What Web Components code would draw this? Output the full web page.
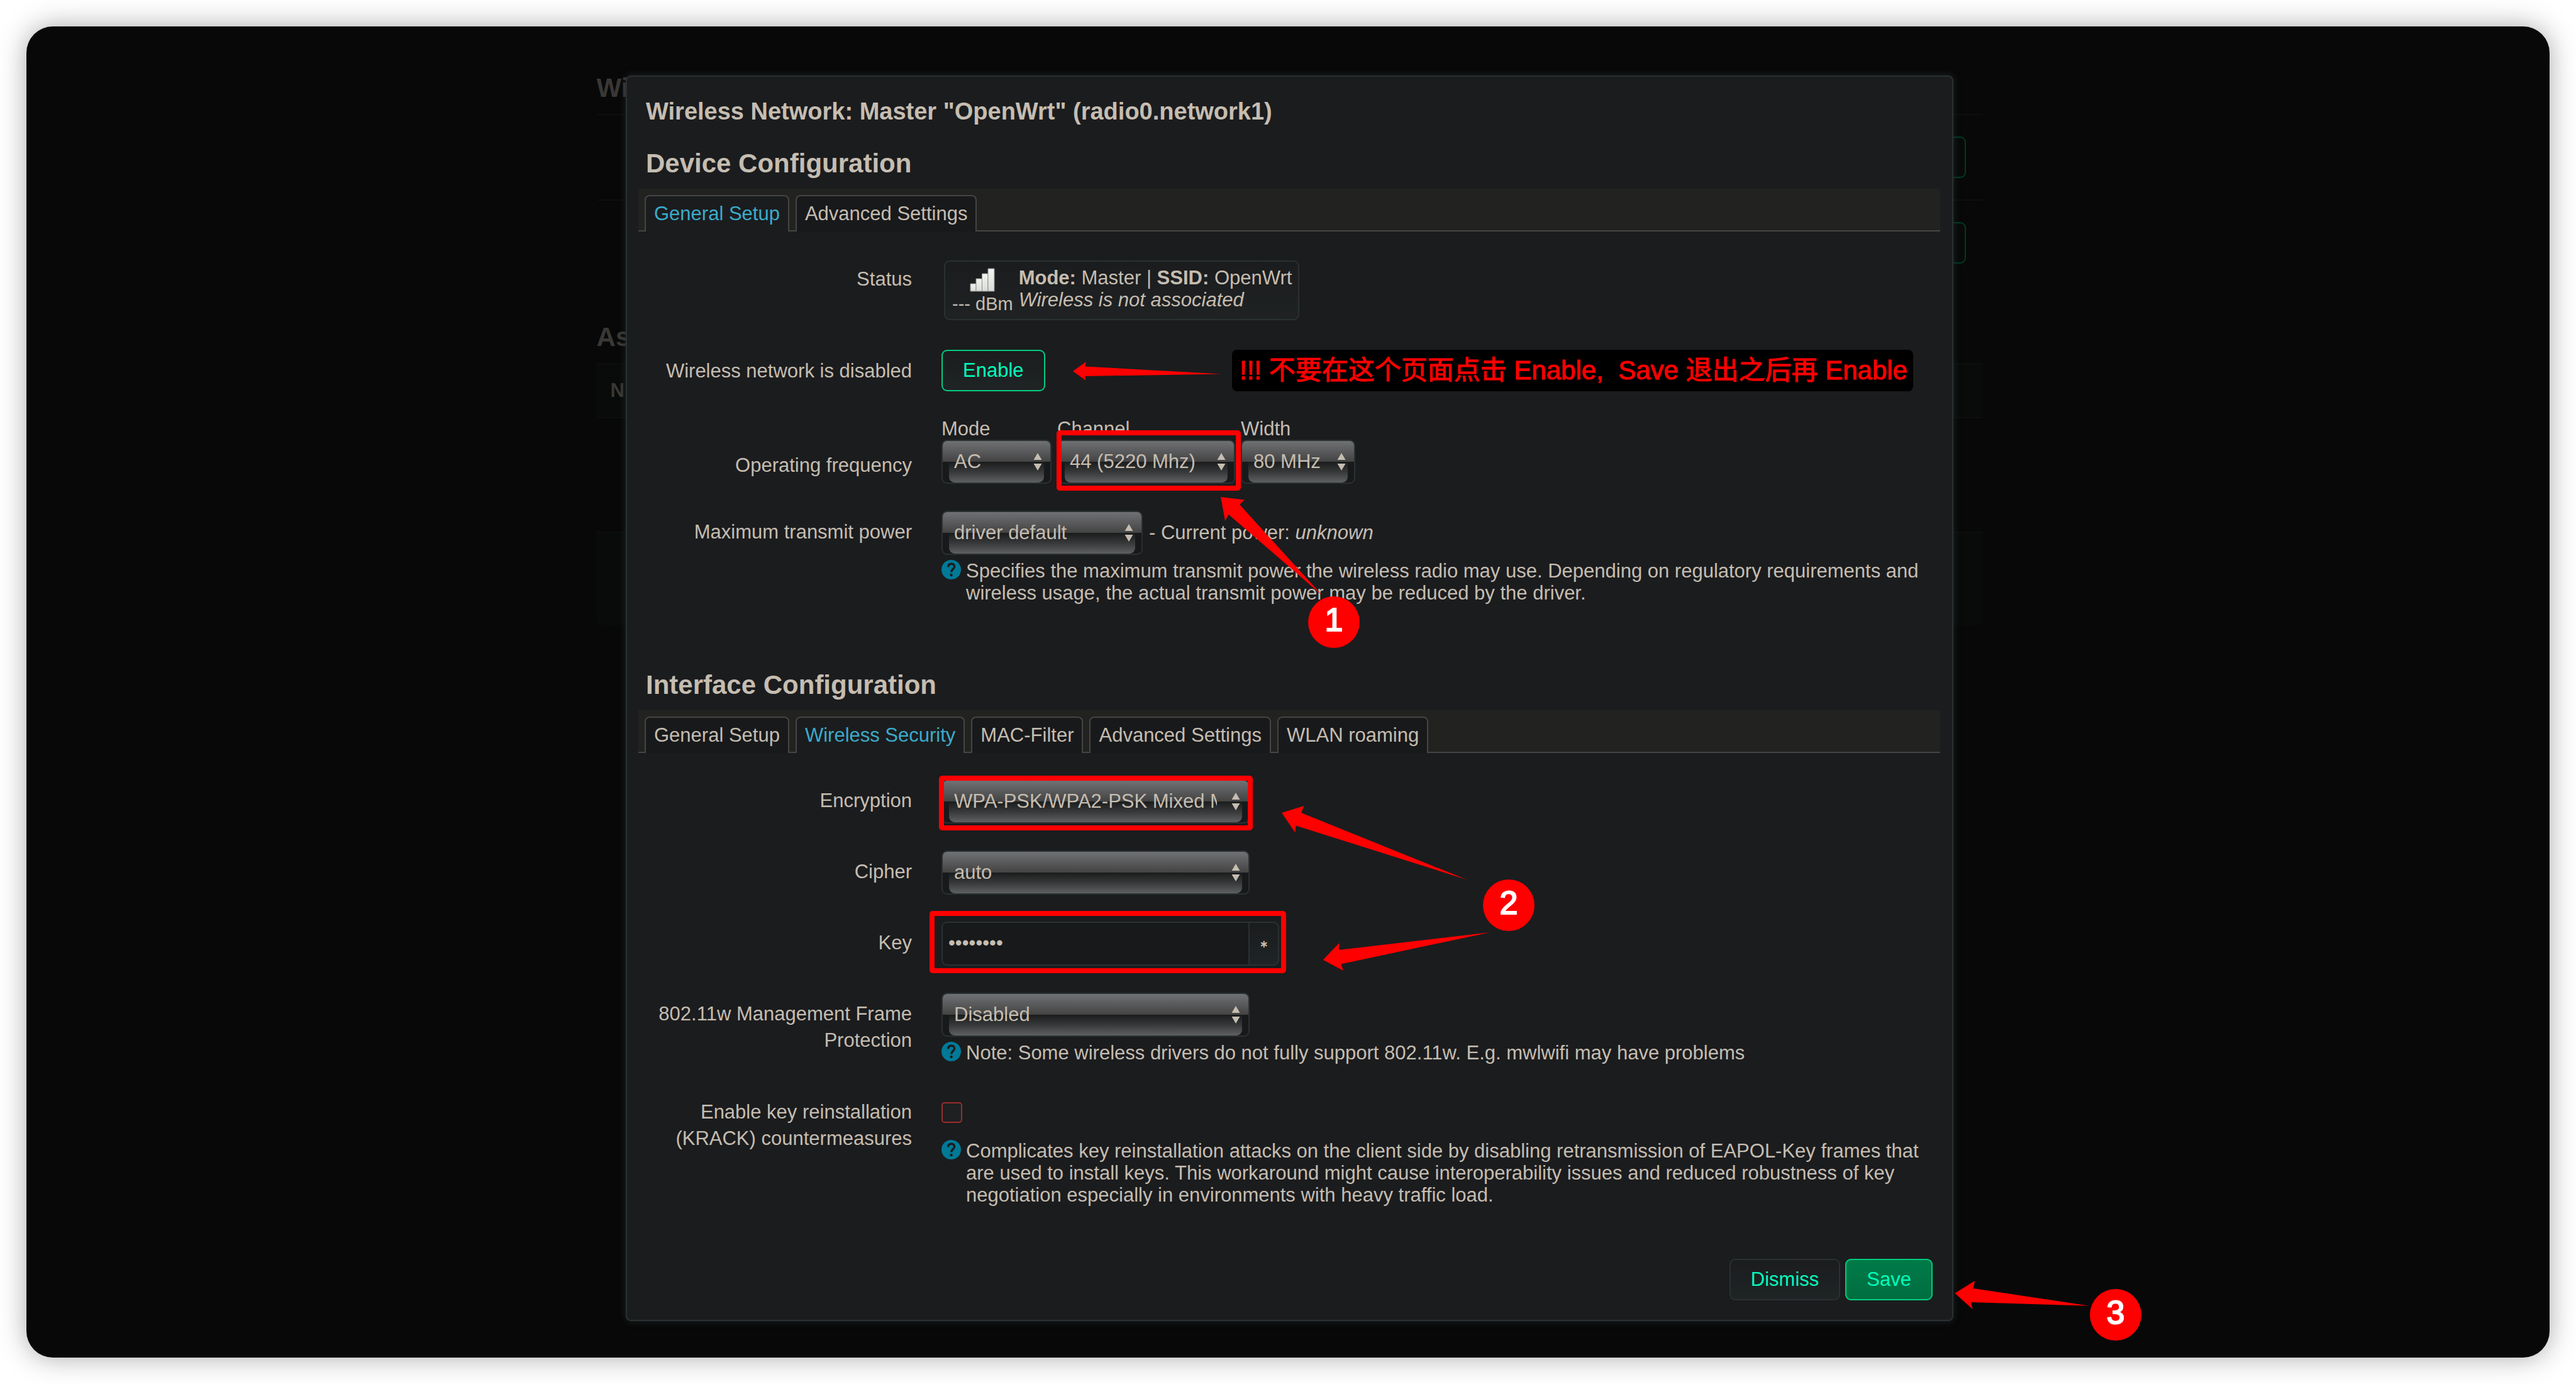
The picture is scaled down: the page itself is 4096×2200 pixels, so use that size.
<!DOCTYPE html>
<html lang="en">
<head>
<meta charset="utf-8">
<title>Wireless Network</title>
<style>
  body {
    margin: 0;
    min-height: 100vh;
    box-sizing: border-box;
    padding: 42px;
    display: flex;
    position: relative;
    overflow-x: hidden;
    background: #fff;
    color: #c5bdb1;
    font: 31px/35px "Liberation Sans", "Noto Sans CJK SC", sans-serif;
  }
</style>
</head>
<body>
<app-window>
  <overview-page></overview-page>
  <wifi-dialog></wifi-dialog>
</app-window>
<mark-layer></mark-layer>

<script>
const define = (name, html) => customElements.define(name, class extends HTMLElement {
  constructor() {
    super();
    this.attachShadow({ mode: "open" }).innerHTML = html;
  }
});

/* Rounded browser frame: the page and the dialog share one grid cell */
define("app-window", `
<style>
  :host {
    flex: 1;
    display: grid;
    grid-template-columns: minmax(0, 1fr);
    justify-items: center;
    align-items: start;
    padding-left: 5px;
    border-radius: 42px;
    background: #080808;
    box-shadow: 0 0 44px rgba(0, 0, 0, .34);
  }
  ::slotted(*) { grid-area: 1 / 1; }
</style>
<slot></slot>`);

/* Dimmed page behind the dialog */
define("overview-page", `
<style>
  :host { display: block; width: 55%; padding-top: 74px; color: #393836; }
  h2 { margin: 0; font-size: 42px; line-height: 48px; }
  .radio {
    display: flex; justify-content: flex-end; align-items: center;
    height: 134px; margin-top: 17px; padding-right: 26px;
    border-top: 2px solid #0d0f0f;
  }
  .radio + .radio { margin-top: 0; }
  .slot { width: 160px; height: 62px; border: 2px solid #003a25; border-radius: 9px; background: #090a0a; }
  h2.second { margin-top: 59px; }
  .head {
    margin-top: 17px; padding: 0 22px; height: 84px; line-height: 84px; font-weight: bold;
    border: solid #0d0f0f; border-width: 2px 0; background: #080b0a;
  }
  .foot { margin-top: 180px; height: 147px; border-top: 2px solid #0d0f0f; background: #080b0a; border-radius: 0 0 8px 8px; }
</style>
<h2>Wi</h2>
<div class="radio"><div class="slot"></div></div>
<div class="radio"><div class="slot"></div></div>
<h2 class="second">As</h2>
<div class="head">N</div>
<div class="foot"></div>`);

define("tab-strip", `
<style>
  :host {
    display: flex; gap: 10px;
    margin: 0 -12px 42px;
    padding: 10px 10px 0;
    background: #222220;
    box-shadow: inset 0 -2px #454545;
  }
  ::slotted(a) {
    box-sizing: border-box; height: 58px;
    padding: 0 13px; line-height: 56px;
    border: 2px solid #454545; border-bottom: 0;
    border-radius: 8px 8px 0 0;
    background: #18191b; color: inherit; text-decoration: none; white-space: nowrap;
  }
  ::slotted(a[aria-current]) { background: #1b1c1e; color: #3cabca; }
</style>
<slot></slot>`);

/* Right-aligned label column and a content column */
define("form-row", `
<style>
  :host { display: grid; grid-template-columns: 423px minmax(0, 1fr); column-gap: 47px; align-items: start; }
  .label { padding-top: var(--label-top, 13px); line-height: 42px; text-align: right; }
</style>
<div class="label"><slot name="label"></slot></div>
<div><slot></slot></div>`);

/* Glossy drop-down face: full-width upper sheen, inset lower sheen, arrows */
define("gloss-box", `
<style>
  :host {
    position: relative; display: block; box-sizing: border-box;
    height: 70px; width: var(--w, 490px);
    border: 2px solid #2a3132; border-radius: 9px; overflow: hidden;
    background: linear-gradient(#707174, #434343) 0 0 / 100% 33px no-repeat, #18191b;
  }
  :host::before {
    content: ""; position: absolute; left: 10px; right: 10px; bottom: 0; height: 33px;
    border-radius: 0 0 9px 9px; background: linear-gradient(#1a1c1c, #37393a 50%, #5f6062);
  }
  svg { position: absolute; right: 13px; top: 19px; width: 14px; height: 28px; fill: #c5bdb1; pointer-events: none; }
</style>
<slot></slot>
<svg viewBox="0 0 14 28" aria-hidden="true"><path d="M7 0 13.500 11H.5ZM.5 17H13.500L7 28Z"/></svg>`);

define("help-note", `
<style>
  :host { display: flex; gap: 8px; margin-top: 8px; }
  svg { flex: none; width: 31px; height: 31px; }
</style>
<svg viewBox="0 0 31 31" aria-hidden="true">
  <circle cx="15.5" cy="15.5" r="15.5" fill="#007a97"/>
  <path d="M10.5 11.5C10.5 8 12.5 6.2 15.6 6.2S20.6 8 20.6 11C20.6 14.6 15.6 14.8 15.6 19.6" fill="none" stroke="#1b1c1e" stroke-width="3.4"/>
  <circle cx="15.6" cy="24" r="2.2" fill="#1b1c1e"/>
</svg>
<div><slot></slot></div>`);

define("status-badge", `
<style>
  :host {
    display: flex; gap: 9px; box-sizing: border-box; width: fit-content; height: 95px; margin: 4px 0 4px 4px;
    padding: 8px 10px 0 11px;
    border: 2px solid #2a3132; border-radius: 9px;
    background: linear-gradient(#1b1c1e, #1f2223); white-space: nowrap;
  }
  .signal { display: flex; flex-direction: column; align-items: center; font-size: 29px; }
  svg { width: 40px; height: 38px; margin: 2px 0 4px; }
  .signal span { line-height: 30px; }
</style>
<div class="signal">
  <svg viewBox="0 0 40 38" aria-hidden="true">
    <defs><linearGradient id="g" x2="0" y2="1"><stop stop-color="#f4f4f1"/><stop offset="1" stop-color="#d9dcd6"/></linearGradient></defs>
    <g fill="url(#g)" stroke="#8f9190" stroke-width="1"><path d="M1 25H10V37H1Z"/><path d="M10 17H19.500V37H10Z"/><path d="M19.500 9H29V37H19.500Z"/><path d="M29 1H39V37H29Z"/></g>
  </svg>
  <span>--- dBm</span>
</div>
<div><slot></slot></div>`);

define("wifi-dialog", `
<style>
  :host {
    display: block; box-sizing: border-box; position: relative;
    width: 2111px; max-width: 96%;
    margin: 78px 0 58px; padding: 33px 31px 31px 30px;
    border: 2px solid #2a3132; border-radius: 8px;
    background: #1b1c1e; box-shadow: 0 0 12px rgba(42, 49, 50, .7);
  }
  h4, h3 { margin: 0; }
  h4 { font-size: 38px; line-height: 44px; margin-bottom: 37px; }
  h3 { font-size: 42px; line-height: 48px; margin-bottom: 16px; }
  section + section { margin-top: 105px; }
  .rows { display: flex; flex-direction: column; gap: 43px; }
  select, input, button { font: inherit; color: inherit; box-sizing: border-box; margin: 0; }
  select {
    position: relative; display: block; width: 100%; height: 66px; padding: 0 50px 2px 18px;
    appearance: none; border: 0; background: none; outline: 0;
  }
  option { background: #1b1c1e; }
  .btn {
    height: 66px; padding: 0 32px 2px; border: 2px solid #2a3132; border-radius: 9px;
    background: linear-gradient(#1b1c1e, #1f2425); color: #00ffbb; display: block;
  }
  .btn.go { border-color: #00cc80; }
  .btn.save { border-color: #00cc80; background: linear-gradient(#007a48, #006e40); }
  .group { display: flex; gap: 9px; }
  .group label { display: block; height: 34px; line-height: 33px; }
  .line { display: flex; align-items: center; gap: 10px; }
  .line span { padding-bottom: 2px; }
  .key { display: flex; width: 537px; }
  .key input {
    flex: 1; min-width: 0; height: 70px; padding: 0 9px 2px; outline: 0;
    border: 2px solid #2a3132; border-radius: 9px 0 0 9px; background: #18191b;
  }
  .key button {
    width: 47px; height: 70px; padding: 0; border: 2px solid #2a3132; border-left: 0;
    border-radius: 0 9px 9px 0; background: linear-gradient(#1b1c1e, #1f2425); font-size: 16px; font-weight: bold;
  }
  .tick {
    appearance: none; display: block; width: 33px; height: 33px; margin: 18px 0 27px;
    border: 2px solid #9c2c2c; border-radius: 5px; background: #1e2021;
  }
  footer { display: flex; justify-content: flex-end; gap: 8px; margin-top: 84px; }
</style>
<h4>Wireless Network: Master "OpenWrt" (radio0.network1)</h4>
<section>
  <h3>Device Configuration</h3>
  <tab-strip><a href="#general" aria-current="page">General Setup</a><a href="#advanced">Advanced Settings</a></tab-strip>
  <div class="rows">
    <form-row>
      <span slot="label">Status</span>
      <status-badge><b>Mode:</b> Master | <b>SSID:</b> OpenWrt<br><i>Wireless is not associated</i></status-badge>
    </form-row>
    <form-row>
      <label slot="label" for="enable">Wireless network is disabled</label>
      <button class="btn go" id="enable">Enable</button>
    </form-row>
    <form-row style="--label-top: 54px">
      <span slot="label">Operating frequency</span>
      <div class="group">
        <div><label for="mode">Mode</label><gloss-box style="--w: 175px"><select id="mode"><option>AC</option></select></gloss-box></div>
        <div><label for="channel">Channel</label><gloss-box style="--w: 283px"><select id="channel"><option>44 (5220 Mhz)</option></select></gloss-box></div>
        <div><label for="width">Width</label><gloss-box style="--w: 182px"><select id="width"><option>80 MHz</option></select></gloss-box></div>
      </div>
    </form-row>
    <form-row>
      <label slot="label" for="power">Maximum transmit power</label>
      <div class="line"><gloss-box style="--w: 320px"><select id="power"><option>driver default</option></select></gloss-box><span>- Current power: <i>unknown</i></span></div>
      <help-note>Specifies the maximum transmit power the wireless radio may use. Depending on regulatory requirements and wireless usage, the actual transmit power may be reduced by the driver.</help-note>
    </form-row>
  </div>
</section>
<section>
  <h3>Interface Configuration</h3>
  <tab-strip><a href="#if-general">General Setup</a><a href="#security" aria-current="page">Wireless Security</a><a href="#mac">MAC-Filter</a><a href="#if-advanced">Advanced Settings</a><a href="#roaming">WLAN roaming</a></tab-strip>
  <div class="rows">
    <form-row>
      <label slot="label" for="encryption">Encryption</label>
      <gloss-box><select id="encryption"><option>WPA-PSK/WPA2-PSK Mixed Mode</option></select></gloss-box>
    </form-row>
    <form-row>
      <label slot="label" for="cipher">Cipher</label>
      <gloss-box><select id="cipher"><option>auto</option></select></gloss-box>
    </form-row>
    <form-row>
      <label slot="label" for="key">Key</label>
      <div class="key"><input id="key" type="password" value="password"><button aria-label="Reveal key">∗</button></div>
    </form-row>
    <form-row>
      <label slot="label" for="frames">802.11w Management Frame Protection</label>
      <gloss-box><select id="frames"><option>Disabled</option></select></gloss-box>
      <help-note>Note: Some wireless drivers do not fully support 802.11w. E.g. mwlwifi may have problems</help-note>
    </form-row>
    <form-row>
      <label slot="label" for="krack">Enable key reinstallation (KRACK) countermeasures</label>
      <input class="tick" id="krack" type="checkbox">
      <help-note style="margin-top: 0">Complicates key reinstallation attacks on the client side by disabling retransmission of EAPOL-Key frames that are used to install keys. This workaround might cause interoperability issues and reduced robustness of key negotiation especially in environments with heavy traffic load.</help-note>
    </form-row>
  </div>
</section>
<footer><button class="btn">Dismiss</button><button class="btn save">Save</button></footer>`);

/* Red tutorial marks drawn on a free canvas over the page */
define("mark-layer", `
<style>
  :host { position: absolute; inset: 0; pointer-events: none; }
  svg { display: block; position: absolute; width: 4096px; height: 2200px; fill: #f00; }
  rect { fill: none; stroke: #f00; stroke-width: 8px; }
  .step {
    position: absolute; width: 82px; height: 82px; border-radius: 50%;
    background: #f00; color: #fff; text-align: center; font-size: 52px; line-height: 74px;
    -webkit-text-stroke: 2px #fff;
  }
  .note {
    position: absolute; left: 1959px; top: 556px; box-sizing: border-box; padding: 0 9px 0 12px; border-radius: 8px;
    background: #000; color: #f00; font-size: 42px; line-height: 66px; white-space: pre;
    -webkit-text-stroke: 1px #f00;
  }
</style>
<svg viewBox="0 0 4096 2200" aria-hidden="true">
  <rect x="1684" y="688" width="285" height="88" rx="1"/>
  <rect x="1497" y="1237" width="491" height="79" rx="1"/>
  <rect x="1482" y="1452" width="559" height="91" rx="1"/>
  <path d="M1706 590 1727 575 1725.500 582.500 1942 594.500 1725.500 598 1726 604.500Z"/>
  <path d="M1941 790 1979 794.500 1971 802 2102 946 1953.700 818 1948 828Z"/>
  <path d="M2038 1292 2073.500 1281 2069 1292 2333 1398.600 2060.700 1312.400 2059.400 1323.600Z"/>
  <path d="M2103.800 1525.800 2129.400 1499 2129 1510 2369.800 1482 2132.400 1532.400 2136 1543Z"/>
  <path d="M3108.400 2055.800 3140 2036 3137.700 2048 3322 2075.700 3134 2070 3136.600 2081Z"/>
</svg>
<div class="note">!!! 不要在这个页面点击 Enable,  Save 退出之后再 Enable</div>
<div class="step" style="left: 2080px; top: 948px">1</div>
<div class="step" style="left: 2358px; top: 1398px">2</div>
<div class="step" style="left: 3323px; top: 2049px">3</div>`);
</script>
</body>
</html>
